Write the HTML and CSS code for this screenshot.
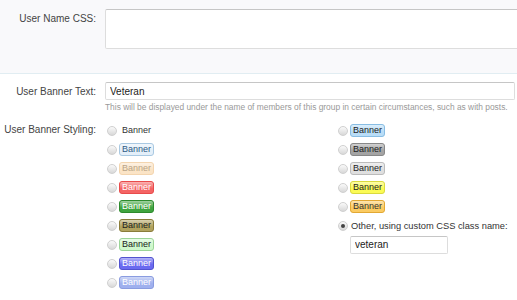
FILE: index.html
```html
<!DOCTYPE html>
<html lang="en">
<head>
    <meta charset="UTF-8">
    <title>User Group Banner</title>
    <link rel="stylesheet" href="styles.css">
</head>
<body>
<div class="ctrl-unit name-css">
    <label class="ctrl-label" for="userNameCss">User Name CSS:</label>
    <div class="ctrl-input">
        <textarea id="userNameCss" class="textarea"></textarea>
    </div>
</div>
<div class="ctrl-unit">
    <label class="ctrl-label" for="bannerText">User Banner Text:</label>
    <div class="ctrl-input">
        <input type="text" id="bannerText" class="text-input" value="Veteran">
        <p class="explain">This will be displayed under the name of members of this group in certain circumstances, such as with posts.</p>
    </div>
</div>
<div class="ctrl-unit styling">
    <div class="ctrl-label">User Banner Styling:</div>
    <div class="banner-grid">
        <ul class="banner-col">
            <li><input type="radio" name="banner"><span class="banner plain">Banner</span></li>
            <li><input type="radio" name="banner"><span class="banner primary">Banner</span></li>
            <li><input type="radio" name="banner"><span class="banner secondary">Banner</span></li>
            <li><input type="radio" name="banner"><span class="banner red">Banner</span></li>
            <li><input type="radio" name="banner"><span class="banner green">Banner</span></li>
            <li><input type="radio" name="banner"><span class="banner olive">Banner</span></li>
            <li><input type="radio" name="banner"><span class="banner light-green">Banner</span></li>
            <li><input type="radio" name="banner"><span class="banner blue">Banner</span></li>
            <li><input type="radio" name="banner"><span class="banner royal-blue">Banner</span></li>
        </ul>
        <ul class="banner-col">
            <li><input type="radio" name="banner"><span class="banner sky-blue">Banner</span></li>
            <li><input type="radio" name="banner"><span class="banner gray">Banner</span></li>
            <li><input type="radio" name="banner"><span class="banner silver">Banner</span></li>
            <li><input type="radio" name="banner"><span class="banner yellow">Banner</span></li>
            <li><input type="radio" name="banner"><span class="banner orange">Banner</span></li>
            <li><input type="radio" name="banner" checked><span class="other-label">Other, using custom CSS class name:</span></li>
            <li class="custom-row"><input type="text" class="text-input custom-class" value="veteran"></li>
        </ul>
    </div>
</div>
</body>
</html>
```

FILE: styles.css
```css
body {
    font-family: "Liberation Sans", Arial, sans-serif;
    font-size: 10px;
    margin: 0;
    padding: 0;
    background-color: #fff;
    color: #333;
    overflow: hidden;
    width: 517px;
    height: 300px;
}
.ctrl-unit {
    display: flex;
    padding-top: 8px;
}
.name-css {
    padding-top: 9px;
    height: 64px;
    background-color: #f9f9fb;
    border-bottom: 1px solid #e1edf2;
}
.ctrl-label {
    width: 105px;
    flex-shrink: 0;
    text-align: right;
    padding-right: 9px;
    padding-top: 3px;
    line-height: 13px;
    color: #444;
    white-space: nowrap;
    box-sizing: border-box;
}
.ctrl-input {
    flex: 1;
}
.textarea {
    display: block;
    width: 430px;
    height: 40px;
    margin: 0;
    border: 1px solid #ddd;
    border-top-color: #c6c6c6;
    border-radius: 2px;
    background: #fff;
    box-sizing: border-box;
    resize: none;
}
.text-input {
    display: block;
    width: 410px;
    height: 18px;
    margin: 0;
    padding: 0 4px;
    border: 1px solid #ddd;
    border-top-color: #c6c6c6;
    border-radius: 2px;
    font-family: inherit;
    font-size: 10px;
    color: #222;
    background: #fff;
    box-sizing: border-box;
}
.explain {
    margin: 2px 0 0;
    font-size: 8.4px;
    line-height: 11px;
    color: #999;
    white-space: nowrap;
}
.styling {
    padding-top: 8px;
}
.styling .ctrl-label {
    padding-top: 2px;
}
.banner-grid {
    display: grid;
    grid-template-columns: 231px 1fr;
}
.banner-col {
    list-style: none;
    margin: 0;
    padding: 0;
}
.banner-col li {
    display: flex;
    align-items: center;
    height: 19px;
    white-space: nowrap;
}
.banner-col input[type="radio"] {
    appearance: none;
    -webkit-appearance: none;
    flex-shrink: 0;
    width: 10px;
    height: 10px;
    margin: 0 2px 0 2px;
    border: 1px solid #d0d0d0;
    border-radius: 50%;
    background: linear-gradient(to bottom, #fafafa, #d8d8d8);
    box-sizing: border-box;
    position: relative;
}
.banner-col input[type="radio"]:checked::after {
    content: "";
    position: absolute;
    left: 2px;
    top: 2px;
    width: 4px;
    height: 4px;
    border-radius: 50%;
    background: #444;
}
.banner {
    display: inline-block;
    padding: 0 2px;
    border: 1px solid transparent;
    border-radius: 3px;
    font-size: 9px;
    line-height: 11px;
    color: #222;
    background-image: linear-gradient(to bottom, rgba(255, 255, 255, 0.5), rgba(255, 255, 255, 0) 60%);
}
.banner.plain {
    background-image: none;
    color: #333;
}
.primary { background-color: #e4eff9; border-color: #a9c9e2; color: #2f5b86; }
.secondary { background-color: #fbe4c6; border-color: #f3d5af; color: #b8a488; }
.red { background-color: #f46464; border-color: #e84b4b; color: #fff; }
.green { background-color: #3fa43f; border-color: #2d8a2d; color: #fff; }
.olive { background-color: #b0a25e; border-color: #8a7c3a; color: #222; }
.light-green { background-color: #cff8cc; border-color: #9bd498; color: #222; }
.blue { background-color: #6a6af0; border-color: #5252cf; color: #fff; }
.royal-blue { background-color: #9fb0ee; border-color: #8a9ce0; color: #fff; }
.sky-blue { background-color: #b9ddf7; border-color: #88bde3; color: #222; }
.gray { background-color: #a4a4a4; border-color: #888; color: #222; }
.silver { background-color: #dfdfdf; border-color: #bbb; color: #222; }
.yellow { background-color: #fbfb55; border-color: #dada3e; color: #222; }
.orange { background-color: #fbcb62; border-color: #e2a833; color: #333; }
.other-label {
    margin-left: 1px;
    font-size: 9.3px;
    color: #333;
}
.custom-row {
    padding-left: 14px;
}
.custom-class {
    width: 98px;
}
```
